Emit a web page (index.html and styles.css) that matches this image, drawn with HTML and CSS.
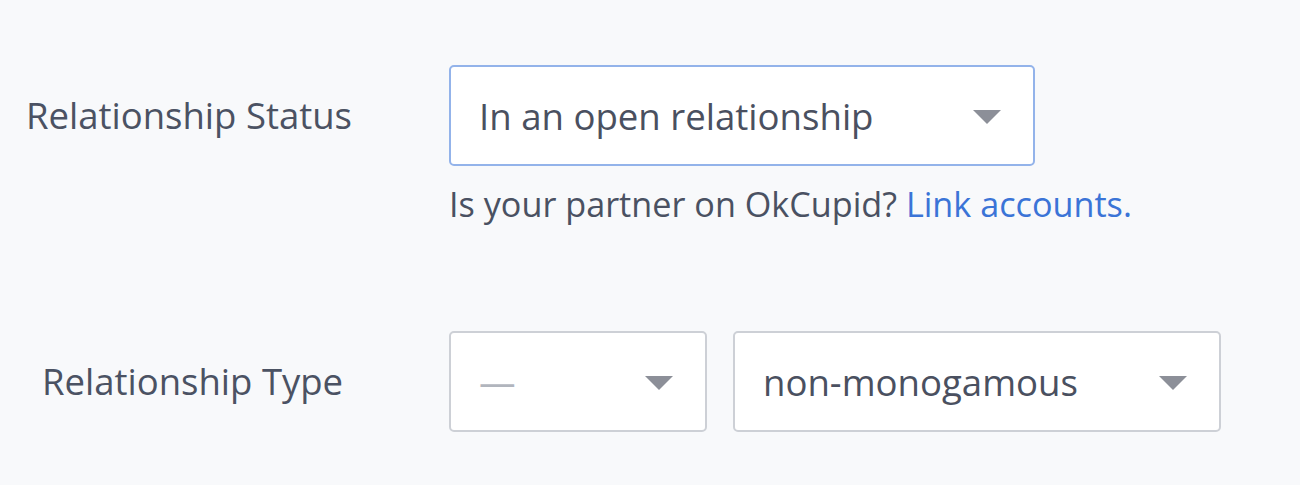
FILE: index.html
```html
<!DOCTYPE html>
<html>
<head>
<meta charset="utf-8">
<link rel="stylesheet" href="styles.css">
</head>
<body>
<div class="form">
  <div class="row row-status">
    <div class="label label-status">Relationship Status</div>
    <div class="field">
      <div class="select select-active select-wide">
        <span class="value">In an open relationship</span>
        <span class="caret"></span>
      </div>
      <div class="help">Is your partner on OkCupid? <a class="link" href="#">Link accounts.</a></div>
    </div>
  </div>
  <div class="row row-type">
    <div class="label label-type">Relationship Type</div>
    <div class="field field-inline">
      <div class="select select-small">
        <span class="value placeholder">—</span>
        <span class="caret"></span>
      </div>
      <div class="select select-medium">
        <span class="value">non-monogamous</span>
        <span class="caret"></span>
      </div>
    </div>
  </div>
</div>
</body>
</html>
```
FILE: styles.css
```css
html, body {
  margin: 0;
  padding: 0;
  background: #f8f9fb;
}
body {
  font-family: "Open Sans", "Liberation Sans", sans-serif;
  color: #4a5162;
  width: 1300px;
  height: 485px;
  overflow: hidden;
}
.form {
  display: flex;
  flex-direction: column;
  padding-top: 65px;
  gap: 104px;
}
.row {
  display: flex;
  align-items: flex-start;
}
.label {
  width: 449px;
  box-sizing: border-box;
  height: 100px;
  display: flex;
  align-items: center;
  font-size: 36.5px;
  color: #4b5263;
}
.label-status { padding-left: 26px; }
.label-type { padding-left: 42px; }
.field {
  display: flex;
  flex-direction: column;
}
.field-inline {
  flex-direction: row;
  gap: 26px;
}
.select {
  box-sizing: border-box;
  height: 101px;
  background: #fff;
  border: 2px solid #cdd0d6;
  border-radius: 5px;
  display: flex;
  align-items: center;
  justify-content: space-between;
  padding: 0 32px 0 28px;
}
.select-active { border-color: #93b3ea; }
.select-wide { width: 586px; }
.select-small { width: 258px; }
.select-medium { width: 488px; }
.value {
  font-size: 36.6px;
  color: #4a5060;
}
.placeholder {
  color: #b1b5bd;
}
.caret {
  width: 0;
  height: 0;
  border-left: 14.5px solid transparent;
  border-right: 14.5px solid transparent;
  border-top: 14px solid #8c8f98;
  margin-top: 2px;
}
.help {
  margin-top: 14px;
  font-size: 34.2px;
  color: #4a5162;
}
.link {
  color: #3b74d7;
  text-decoration: none;
}
```
